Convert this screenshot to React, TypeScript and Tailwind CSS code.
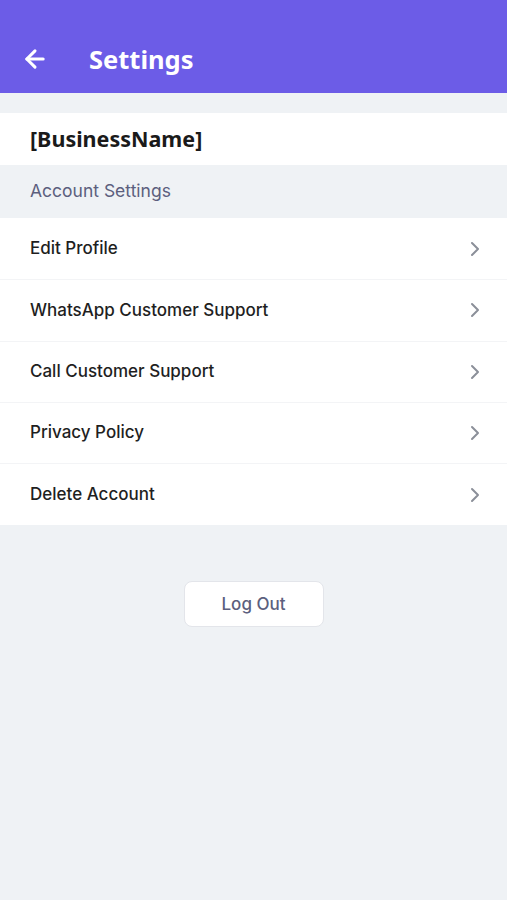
import { ChevronRight, ArrowLeft } from "lucide-react";

const items = [
  "Edit Profile",
  "WhatsApp Customer Support",
  "Call Customer Support",
  "Privacy Policy",
  "Delete Account",
];

export default function App() {
  return (
    <div
      className="min-h-[900px] w-full bg-[#eff2f5]"
      style={{ fontFamily: "Inter, 'Noto Sans', sans-serif" }}
    >
      <header className="flex h-[93px] items-end bg-[#6c5ce7] pb-[19px]">
        <button className="ml-[20px] flex h-[30px] w-[30px] items-center justify-center text-white">
          <ArrowLeft size={28} strokeWidth={2.6} />
        </button>
        <h1
          className="ml-[39px] text-[25.5px] font-bold leading-[30px] text-white"
          style={{ fontFamily: "'Noto Sans', sans-serif" }}
        >
          Settings
        </h1>
      </header>

      <div className="mt-[20px] flex h-[52px] items-center bg-white px-[30px]">
        <span
          className="text-[21.5px] font-bold text-[#1a1a1a]"
          style={{ fontFamily: "'Noto Sans', sans-serif" }}
        >
          [BusinessName]
        </span>
      </div>

      <div className="flex h-[53px] items-center px-[30px]">
        <span className="text-[17.5px] text-[#5c5f7e]">Account Settings</span>
      </div>

      <ul className="bg-white pt-[1px]">
        {items.map((label, i) => (
          <li
            key={label}
            className={
              "flex h-[61.25px] items-center justify-between pl-[30px] pr-[20px] " +
              (i < items.length - 1 ? "border-b border-[#f3f4f6]" : "")
            }
          >
            <span className="text-[17px] font-medium text-[#1f1f1f]">{label}</span>
            <ChevronRight size={24} strokeWidth={2} className="text-[#8b8f99]" />
          </li>
        ))}
      </ul>

      <div className="mt-[56px] flex justify-center">
        <button className="h-[46px] w-[140px] rounded-[8px] border border-[#e3e5ea] bg-white text-[17px] font-medium text-[#5c5f7e]">
          Log Out
        </button>
      </div>
    </div>
  );
}
